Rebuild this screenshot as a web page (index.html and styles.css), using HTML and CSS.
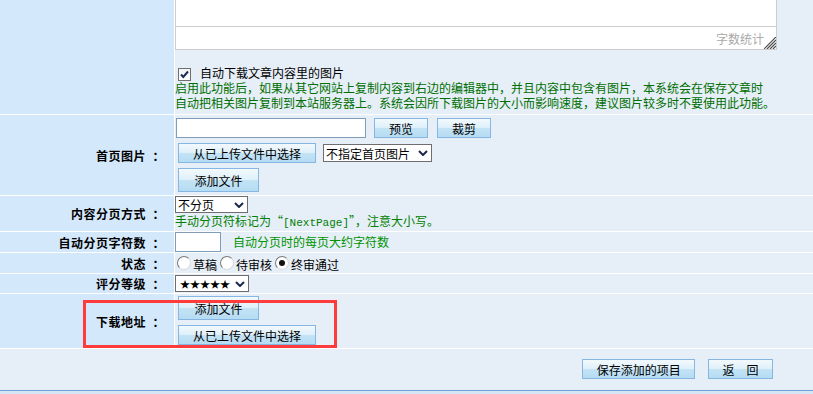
FILE: index.html
```html
<!DOCTYPE html>
<html lang="zh-CN">

<head>
    <meta charset="UTF-8">
    <meta name="viewport" content="width=device-width, initial-scale=1.0">
    <title>添加项目</title>
    <link rel="stylesheet" href="styles.css">
</head>

<body>
    <table class="form_table">
        <tr>
            <td class="label_cell row_editor"></td>
            <td class="field_cell">
                <div class="editor">
                    <div class="editor_body"></div>
                    <div class="editor_status">
                        <span class="word_count">字数统计</span>
                        <svg class="resize_handle" width="12" height="12" viewBox="0 0 12 12">
                            <path d="M12 0L0 12M12 3L3 12M12 6L6 12M12 9L9 12" stroke="#4a4a4a" stroke-width="1.2" fill="none" />
                        </svg>
                    </div>
                </div>
                <div class="check_line">
                    <span class="check_box">
                        <svg width="11" height="11" viewBox="0 0 11 11">
                            <path d="M2 5.5L4.3 8L9 2.5" stroke="#1b2b55" stroke-width="2" fill="none" />
                        </svg>
                    </span>
                    <span>自动下载文章内容里的图片</span>
                </div>
                <p class="tip_text">启用此功能后，如果从其它网站上复制内容到右边的编辑器中，并且内容中包含有图片，本系统会在保存文章时<br>自动把相关图片复制到本站服务器上。系统会因所下载图片的大小而影响速度，建议图片较多时不要使用此功能。</p>
            </td>
        </tr>
        <tr>
            <td class="label_cell row_pic">首页图片&nbsp;&nbsp;：</td>
            <td class="field_cell">
                <div class="line pic_line">
                    <span class="text_input pic_input"></span>
                    <span class="btn btn_preview">预览</span>
                    <span class="btn btn_cut">裁剪</span>
                </div>
                <div class="line pic_line2">
                    <span class="btn btn_upload">从已上传文件中选择</span>
                    <span class="select select_pic"><span>不指定首页图片</span>
                        <svg width="10" height="6" viewBox="0 0 10 6"><path d="M1 1L5 5L9 1" stroke="#1c2849" stroke-width="2" fill="none" /></svg>
                    </span>
                </div>
                <div class="line pic_line3">
                    <span class="btn btn_add">添加文件</span>
                </div>
            </td>
        </tr>
        <tr>
            <td class="label_cell row_page">内容分页方式&nbsp;&nbsp;：</td>
            <td class="field_cell">
                <span class="select select_page"><span>不分页</span>
                    <svg width="10" height="6" viewBox="0 0 10 6"><path d="M1 1L5 5L9 1" stroke="#1c2849" stroke-width="2" fill="none" /></svg>
                </span>
                <div class="page_tip">手动分页符标记为“<span class="code">[NextPage]</span>”，注意大小写。</div>
            </td>
        </tr>
        <tr>
            <td class="label_cell row_count">自动分页字符数&nbsp;&nbsp;：</td>
            <td class="field_cell">
                <div class="line">
                    <span class="text_input count_input"></span>
                    <span class="count_tip">自动分页时的每页大约字符数</span>
                </div>
            </td>
        </tr>
        <tr>
            <td class="label_cell row_status">状态&nbsp;&nbsp;：</td>
            <td class="field_cell">
                <div class="radio_line">
                    <span class="radio first_radio"></span><span class="radio_text">草稿</span>
                    <span class="radio"></span><span class="radio_text">待审核</span>
                    <span class="radio checked"></span><span class="radio_text">终审通过</span>
                </div>
            </td>
        </tr>
        <tr>
            <td class="label_cell row_level">评分等级&nbsp;&nbsp;：</td>
            <td class="field_cell">
                <span class="select select_level"><span class="stars">★★★★★</span>
                    <svg width="10" height="6" viewBox="0 0 10 6"><path d="M1 1L5 5L9 1" stroke="#1c2849" stroke-width="2" fill="none" /></svg>
                </span>
            </td>
        </tr>
        <tr>
            <td class="label_cell row_download">下载地址&nbsp;&nbsp;：</td>
            <td class="field_cell">
                <div class="line download_line">
                    <span class="btn btn_add">添加文件</span>
                </div>
                <div class="line download_line2">
                    <span class="btn btn_upload">从已上传文件中选择</span>
                </div>
            </td>
        </tr>
        <tr>
            <td colspan="2" class="action_cell">
                <span class="btn btn_save">保存添加的项目</span>
                <span class="btn btn_back">返　回</span>
            </td>
        </tr>
    </table>
    <div class="footer_bar"></div>

    <!-- 标注框 -->
    <div class="mark_box"></div>
</body>

</html>
```
FILE: styles.css
```css
* {
    margin: 0;
    padding: 0;
    box-sizing: border-box;
}

body {
    font-family: "Noto Sans CJK SC", "Noto Sans", sans-serif;
    font-size: 12px;
    line-height: 15px;
    color: #000;
    background: #d6e5f6;
    overflow: hidden;
}

.form_table {
    width: 815px;
    margin: -1px -1px -1px -1px;
    border-collapse: separate;
    border-spacing: 1px;
    background: #fff;
    table-layout: fixed;
}

.label_cell {
    width: 174px;
    background: #d4e8fc;
    text-align: right;
    padding-right: 9px;
    font-weight: bold;
    letter-spacing: 0.5px;
    vertical-align: middle;
}

.field_cell {
    background: #e6eef8;
    vertical-align: top;
}

.row_editor { height: 114px; }
.row_pic { height: 80px; }
.row_page { height: 33px; }
.row_count { height: 20px; }
.row_status { height: 20px; }
.row_level { height: 19px; }
.row_download { height: 54px; }

.line {
    display: flex;
    align-items: flex-start;
}

/* editor */
.editor {
    width: 602px;
    border: 1px solid #cccccc;
    border-top: 0;
    background: #fff;
}

.editor_body {
    height: 27px;
    border-bottom: 1px solid #cccccc;
}

.editor_status {
    height: 22px;
    display: flex;
    justify-content: flex-end;
    align-items: flex-end;
}

.word_count {
    color: #a9a9a9;
    line-height: 15px;
    margin-bottom: 3px;
}

.resize_handle {
    display: block;
}

.check_line {
    margin-top: 17px;
    height: 15px;
    display: flex;
    align-items: center;
    font-family: "Liberation Sans", "Noto Sans CJK SC", sans-serif;
}

.check_box {
    width: 13px;
    height: 13px;
    margin-left: 3px;
    margin-right: 9px;
    border: 1px solid #707070;
    background: linear-gradient(#f4f4f4, #ffffff);
    display: flex;
    align-items: center;
    justify-content: center;
}

.check_box svg {
    display: block;
}

.tip_text {
    color: #006e00;
    white-space: nowrap;
    font-family: "Liberation Sans", "Noto Sans CJK SC", sans-serif;
}

/* inputs and buttons */
.text_input {
    display: block;
    height: 20px;
    background: #fff;
    border: 1px solid #7f9db9;
}

.pic_input {
    width: 190px;
    margin-left: 1px;
}

.btn {
    display: inline-flex;
    align-items: center;
    justify-content: center;
    height: 20px;
    border: 1px solid #85b7e2;
    background: linear-gradient(#f2f9fd 0%, #dff0fa 48%, #c3e3f5 52%, #b5dcf3 100%);
    white-space: nowrap;
    color: #000;
}

.pic_line {
    margin-top: 3px;
}

.btn_preview {
    width: 54px;
    margin-left: 8px;
}

.btn_cut {
    width: 54px;
    margin-left: 9px;
}

.pic_line2 {
    margin-top: 5px;
}

.btn_upload {
    width: 138px;
    margin-left: 3px;
}

.pic_line3 {
    margin-top: 5px;
}

.btn_add {
    width: 81px;
    height: 24px;
    margin-left: 3px;
}

.select {
    display: flex;
    align-items: center;
    justify-content: space-between;
    height: 17px;
    background: #fff;
    border: 1px solid #6e6e6e;
    padding: 0 3px 0 2px;
    line-height: 15px;
}

.select svg {
    display: block;
}

.select_pic {
    width: 109px;
    height: 18px;
    margin-left: 7px;
    margin-top: 1px;
}

.select_page {
    width: 73px;
}

.select_level {
    width: 74px;
    margin-top: 1px;
}

.stars {
    font-size: 10px;
    letter-spacing: 0px;
    padding-left: 2px;
}

.page_tip {
    color: #008000;
    white-space: nowrap;
}

.code {
    font-family: "Liberation Mono", monospace;
    font-size: 11px;
}

.count_tip {
    margin-left: 12px;
    color: #009400;
    line-height: 20px;
}

.count_input {
    width: 46px;
}

.radio_line {
    height: 20px;
    display: flex;
    align-items: center;
}

.radio {
    width: 14px;
    height: 14px;
    margin: 0 2px 0 3px;
    border-radius: 50%;
    border: 1px solid;
    border-color: #7a7a7a #d8d8d8 #d8d8d8 #7a7a7a;
    background: #fff;
    display: flex;
    align-items: center;
    justify-content: center;
}

.first_radio {
    margin-left: 2px;
}

.radio.checked::after {
    content: "";
    width: 6px;
    height: 6px;
    border-radius: 50%;
    background: #111;
}

.radio_text {
    padding-top: 3px;
}

.download_line {
    margin-top: 2px;
}

.download_line2 {
    margin-top: 5px;
}

.action_cell {
    height: 41px;
    background: #e6eef8;
    text-align: right;
    vertical-align: top;
    padding: 10px 40px 0 0;
}

.btn_save {
    width: 113px;
}

.btn_back {
    width: 65px;
    margin-left: 10px;
}

.footer_bar {
    height: 10px;
    border-top: 1px solid #6f9fd8;
    background: #d6e5f6;
}

.mark_box {
    position: absolute;
    left: 83px;
    top: 300px;
    width: 254px;
    height: 48px;
    border: 3px solid #ff3b3b;
}
```
